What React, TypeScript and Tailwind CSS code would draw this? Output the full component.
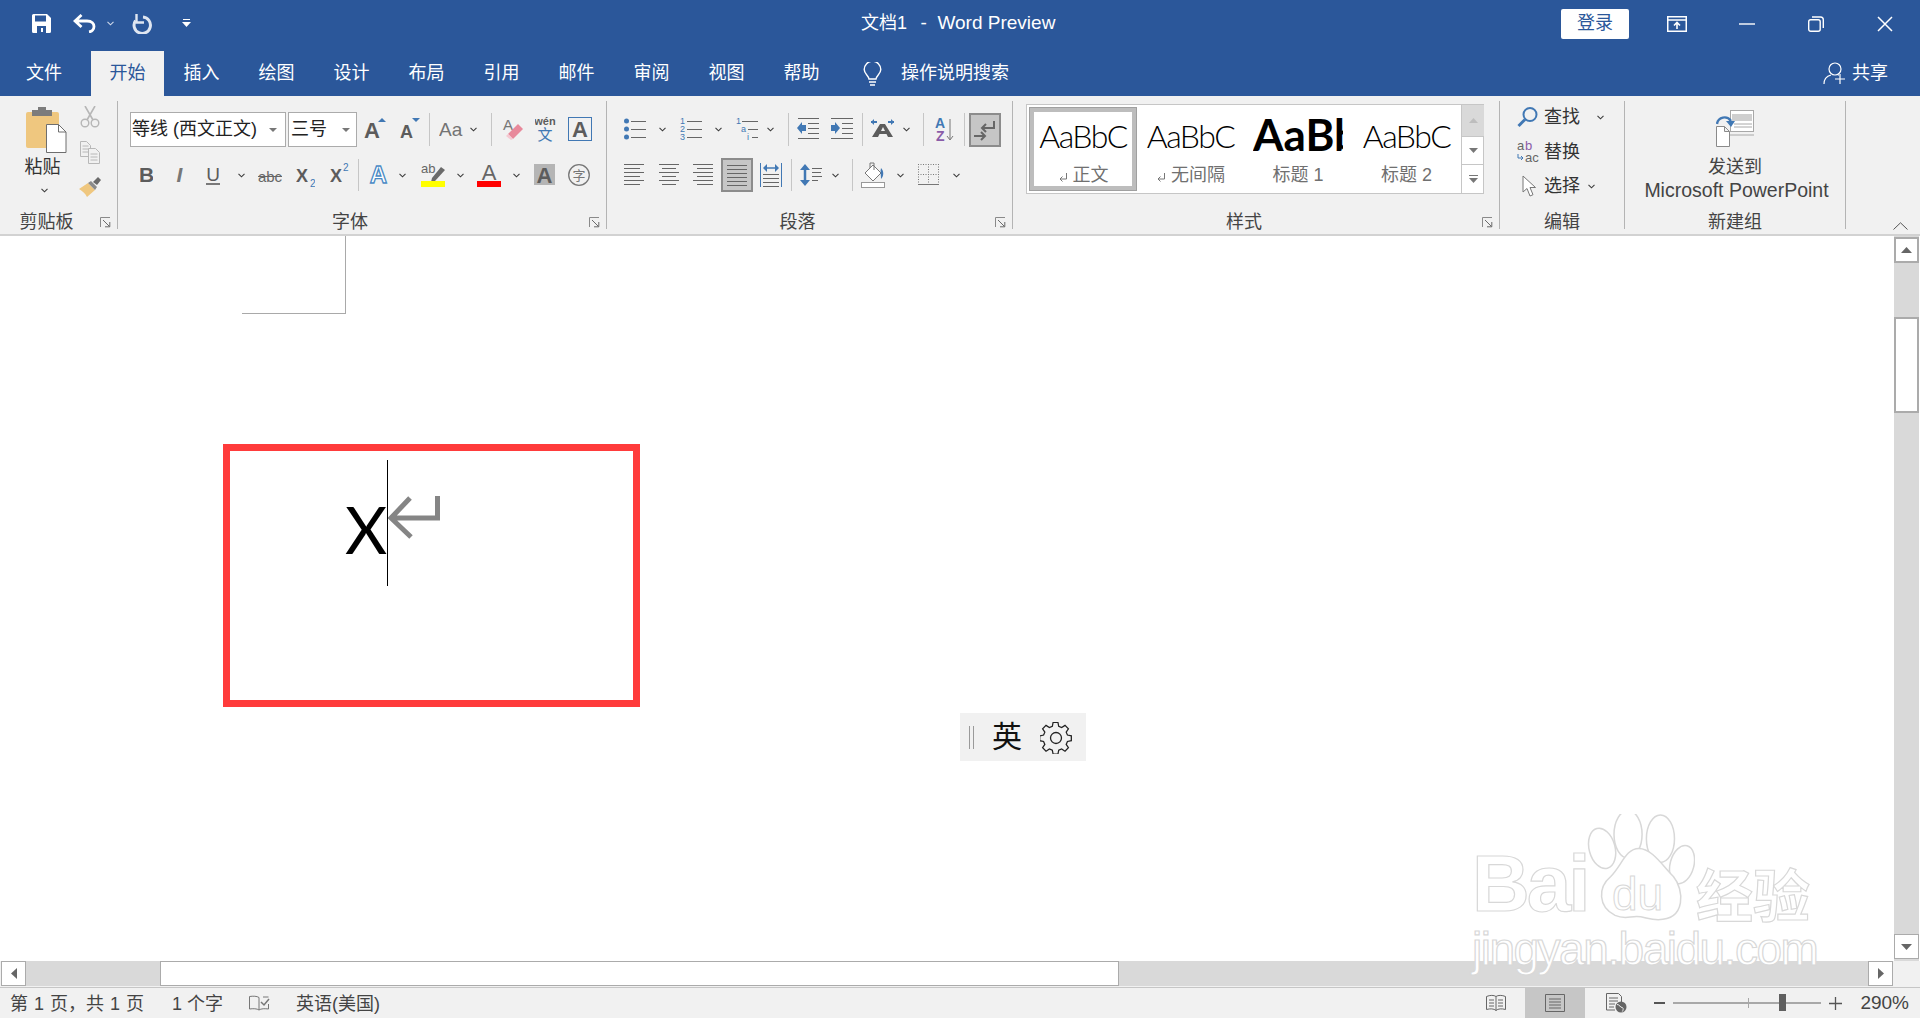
import React from 'react'

const LATIN = '"Liberation Sans", "Noto Sans CJK SC", sans-serif'
const CJK = '"Noto Sans CJK SC", sans-serif'
const BLUE = '#4178b4'
const GRAY = '#5c5c5c'

// svg of a fixed box, the coords inside are box coords
const Ic = ({ w, h, c = '', children }: { w: number; h: number; c?: string; children?: React.ReactNode }) => (
  <svg width={w} height={h} viewBox={`0 0 ${w} ${h}`} fill="none" className={`shrink-0 ${c}`}>
    {children}
  </svg>
)

const Chev = ({ c = '' }: { c?: string }) => (
  <svg width={7} height={5} viewBox="0 0 7 5" fill="none" className={`shrink-0 ${c}`}>
    <path d="M.5 .8 3.5 3.8 6.5 .8" stroke="#3c3c3c" strokeWidth="1.1" />
  </svg>
)

const Sep = ({ c = '' }: { c?: string }) => <div className={`w-px shrink-0 bg-[#c6c6c6] ${c}`} />

const GroupLine = () => <div className="w-px h-[128px] mt-[5px] bg-[#b4b4b4] shrink-0" />

const Launcher = () => (
  <svg width={11} height={11} viewBox="0 0 11 11" fill="none" className="absolute right-[6px] top-[7px]">
    <path d="M.5 10V.5H10" stroke="#8a8a8a" />
    <path d="M3 3 9.5 9.5M5 9.8H9.8V5" stroke="#6a6a6a" />
  </svg>
)

const Group = ({ c, label, launcher, children }: { c: string; label: string; launcher?: boolean; children?: React.ReactNode }) => (
  <div className={`flex flex-col h-full shrink-0 ${c}`}>
    <div className="h-[114px]">{children}</div>
    <div className={`relative h-[24px] flex items-center justify-center text-[18px] text-[#444] ${launcher ? 'pr-[24px]' : ''}`}>
      {label}
      {launcher && <Launcher />}
    </div>
  </div>
)

const Glyph = ({ x, y, s, f = GRAY, wt = 600, ff = LATIN, a, children }: { x: number; y: number; s: number; f?: string; wt?: number; ff?: string; a?: 'middle'; children: string }) => (
  <text x={x} y={y} fontSize={s} fill={f} fontWeight={wt} fontFamily={ff} textAnchor={a}>
    {children}
  </text>
)

const Lines = ({ ys, spans, color = '#666' }: { ys: number[]; spans: [number, number][]; color?: string }) => (
  <>
    {ys.map((y, i) => (
      <path key={y} d={`M${spans[i % spans.length][0]} ${y + 0.5}H${spans[i % spans.length][1]}`} stroke={color} />
    ))}
  </>
)

const TABS = ['插入', '绘图', '设计', '布局', '引用', '邮件', '审阅', '视图', '帮助']

const TitleBar = () => (
  <div className="h-[51px] bg-[#2b579a] flex items-center pr-[27px] pb-[4px] text-white shrink-0">
    <Ic w={19} h={19} c="ml-[32px]">
      <path d="M0 1.5A1.5 1.5 0 0 1 1.5 0H15l4 4v13.5a1.5 1.5 0 0 1-1.5 1.5h-16A1.5 1.5 0 0 1 0 17.5Z" fill="#fff" />
      <path d="M3 1.5h11v6H3ZM5 12h9v7H5Z" fill="#2b579a" />
      <path d="M9 14h2v4H9Z" fill="#fff" />
    </Ic>
    <Ic w={23} h={19} c="ml-[22px]">
      <path d="M8.500 1 2 7l6.500 6M2 7h12c5 0 7 3 7 5.500s-2 5-5 5.500" stroke="#fff" strokeWidth="2.800" />
    </Ic>
    <svg width={7} height={5} viewBox="0 0 7 5" fill="none" className="ml-[11px] shrink-0">
      <path d="M.5 .8 3.5 3.8 6.5 .8" stroke="#cfd9ea" strokeWidth="1.1" />
    </svg>
    <Ic w={21} h={20} c="ml-[17px]">
      <path d="M12 3a8.200 8.200 0 1 1-7.500 3.500" stroke="#dfe6f1" strokeWidth="3" />
      <path d="M5.500 0v8.500H13" stroke="#dfe6f1" strokeWidth="2.400" />
    </Ic>
    <Ic w={9} h={9} c="ml-[30px]">
      <path d="M1 .5h7" stroke="#fff" />
      <path d="M0 3h9L4.500 8Z" fill="#fff" />
    </Ic>
    <div className="ml-[670px] flex items-center text-[18px] whitespace-pre">
      文档1<span className="ml-[3px] text-[19px]">  -  Word Preview</span>
    </div>
    <div className="ml-auto w-[68px] h-[30px] bg-white rounded-[2px] flex items-center justify-center text-[18px] text-[#2b579a]">登录</div>
    <Ic w={20} h={16} c="ml-[38px]">
      <path d="M.75.75h18.5v14.5H.75ZM1 4h18" stroke="#fff" strokeWidth="1.5" />
      <path d="M10 13V7M7 9.5l3-3 3 3" stroke="#fff" strokeWidth="1.6" />
    </Ic>
    <Ic w={16} h={2} c="ml-[52px]">
      <path d="M0 1h16" stroke="#fff" strokeWidth="1.4" />
    </Ic>
    <Ic w={16} h={16} c="ml-[53px]">
      <rect x=".7" y="3.7" width="11.5" height="11.6" rx="2" stroke="#fff" strokeWidth="1.4" />
      <path d="M4 1h8.5A2.8 2.8 0 0 1 15.3 3.8V12" stroke="#fff" strokeWidth="1.4" />
    </Ic>
    <Ic w={16} h={16} c="ml-[53px]">
      <path d="M1 1l14 14M15 1 1 15" stroke="#fff" strokeWidth="1.5" />
    </Ic>
  </div>
)

const TabBar = () => (
  <div className="h-[45px] bg-[#2b579a] flex items-center pr-[32px] text-white text-[18px] shrink-0">
    <div className="w-[88px] mr-[3px] text-center">文件</div>
    <div className="w-[73px] h-full bg-[#f1f1f1] text-[#2b579a] flex items-center justify-center">开始</div>
    {TABS.map((t) => (
      <div key={t} className="w-[75px] text-center">
        {t}
      </div>
    ))}
    <Ic w={19} h={24} c="ml-[24px]">
      <path d="M6 17c0-3-4.800-5-4.800-9.500a8.300 8.300 0 0 1 16.600 0C17.800 12 13 14 13 17Z" stroke="#fff" strokeWidth="1.4" />
      <path d="M6 20h7M7 23h5" stroke="#fff" strokeWidth="1.6" />
    </Ic>
    <div className="ml-[19px]">操作说明搜索</div>
    <Ic w={23} h={23} c="ml-auto">
      <circle cx="12" cy="7" r="6" stroke="#fff" strokeWidth="1.2" />
      <path d="M1 22c0-5 3-8 7-9M15 13h1" stroke="#fff" strokeWidth="1.2" />
      <path d="M17 12v10M12 17h10" stroke="#fff" strokeWidth="1.2" />
    </Ic>
    <div className="ml-[6px]">共享</div>
  </div>
)

const Clipboard = () => (
  <Group c="w-[117px]" label="剪贴板" launcher>
    <div className="flex">
      <div className="w-[78px] pt-[11px] flex flex-col items-center">
        <Ic w={41} h={46} c="ml-[15px]">
          <rect y="5" width="33" height="36" rx="2" fill="#efc77f" />
          <path d="M6 9V3h6V0h8v3h6v6Z" fill="#7c7c7c" />
          <path d="M20.500 17.500h12l7.500 7.500v20.500H20.500Z" fill="#fff" stroke="#6e6e6e" />
          <path d="M32.500 17.500V25H40" stroke="#6e6e6e" />
        </Ic>
        <div className="text-[18px] leading-[22px] mt-[3px] ml-[7px] text-[#333]">粘贴</div>
        <Chev c="mt-[10px] ml-[10px]" />
      </div>
      <div className="w-[24px] pt-[10px] flex flex-col">
        <Ic w={20} h={22} c="ml-[2px]">
          <path d="M5 0l8 14M15 0 7 14" stroke="#b6b6b6" strokeWidth="1.6" />
          <circle cx="5" cy="17" r="3.800" stroke="#b6b6b6" strokeWidth="1.4" />
          <circle cx="15" cy="17" r="3.800" stroke="#b6b6b6" strokeWidth="1.4" />
        </Ic>
        <Ic w={20} h={23} c="mt-[13px] ml-[2px]">
          <path d="M.5.5h6l4 4v11H.5ZM2.500 5h6M2.500 8h6M2.500 11h6" stroke="#b8b8b8" />
          <path d="M8.500 7.500h7l4 4v11h-11ZM10.500 13h7M10.500 16h7M10.500 19h7" stroke="#b8b8b8" fill="#f1f1f1" />
        </Ic>
        <Ic w={23} h={20} c="mt-[13px]">
          <path d="M1 12 10 6l7 7-8 7C7 16 4 14 1 12Z" fill="#efc77f" />
          <path d="M10 6l3-2 6 6-2 3Z" fill="#8a8a8a" />
          <path d="M15 5 20 0l3 3-4 5Z" fill="#6a6a6a" />
        </Ic>
      </div>
    </div>
  </Group>
)

const FontGroup = () => (
  <Group c="w-[488px]" label="字体" launcher>
    <div className="flex h-[35px] mt-[16px] items-center">
      <div className="ml-[12px] w-[156px] h-[35px] shrink-0 bg-white border border-[#ababab] flex items-center pl-[1px] text-[18px] text-[#222] relative whitespace-nowrap">
        等线 (西文正文)
        <svg width={8} height={4} className="absolute right-[8px] top-[15px]"><path d="M0 0h8L4 4Z" fill="#777" /></svg>
      </div>
      <div className="ml-[2px] w-[69px] h-[35px] shrink-0 bg-white border border-[#ababab] flex items-center pl-[2px] text-[18px] text-[#222] relative">
        三号
        <svg width={8} height={4} className="absolute right-[6px] top-[15px]"><path d="M0 0h8L4 4Z" fill="#777" /></svg>
      </div>
      <Ic w={22} h={35} c="ml-[7px]">
        <Glyph x={0} y={26} s={22}>A</Glyph>
        <path d="M14 10h8l-4-4Z" fill={BLUE} />
      </Ic>
      <Ic w={21} h={35} c="ml-[13px]">
        <Glyph x={1} y={26} s={18}>A</Glyph>
        <path d="M13 6h8l-4 4Z" fill={BLUE} />
      </Ic>
      <Sep c="ml-[9px] h-[33px]" />
      <Ic w={24} h={35} c="ml-[9px]">
        <Glyph x={0} y={24} s={19} wt={500} f="#747474">Aa</Glyph>
      </Ic>
      <Chev c="ml-[7px]" />
      <Sep c="ml-[14px] h-[33px]" />
      <Ic w={21} h={35} c="ml-[10px]">
        <Glyph x={1} y={18} s={15} wt={500} f="#777">A</Glyph>
        <path d="M6 22 16 12l5 5-10 10Z" fill="#e8899b" />
        <path d="M6 22l5 5-2 1-5-4Z" fill="#f5c9d2" />
      </Ic>
      <Ic w={21} h={35} c="ml-[12px]">
        <Glyph x={10} y={13} s={11} wt={700} a="middle">wén</Glyph>
        <Glyph x={10} y={28} s={15} wt={400} f={BLUE} ff={CJK} a="middle">文</Glyph>
      </Ic>
      <Ic w={24} h={35} c="ml-[12px]">
        <rect x=".5" y="5.500" width="23" height="23" stroke={BLUE} />
        <Glyph x={12} y={25} s={22} a="middle">A</Glyph>
      </Ic>
    </div>
    <div className="flex h-[36px] mt-[10px] items-center">
      <Ic w={13} h={36} c="ml-[22px]"><Glyph x={6.500} y={25} s={21} wt={700} a="middle">B</Glyph></Ic>
      <Ic w={13} h={36} c="ml-[20px]">
        <text x={6.500} y={25} fontSize={21} fill="#777" fontWeight={700} fontStyle="italic" fontFamily={LATIN} textAnchor="middle">I</text>
      </Ic>
      <Ic w={14} h={36} c="ml-[20px]">
        <Glyph x={7} y={24} s={19} wt={500}  a="middle">U</Glyph>
        <path d="M0 27h14" stroke={GRAY} strokeWidth="1.6" />
      </Ic>
      <Chev c="ml-[18px]" />
      <Ic w={24} h={36} c="ml-[13px]">
        <Glyph x={12} y={25} s={15} wt={400} f="#666" a="middle">abc</Glyph>
        <path d="M0 19.500h24" stroke="#666" />
      </Ic>
      <Ic w={19} h={36} c="ml-[14px]">
        <Glyph x={0} y={25} s={18} wt={700}>X</Glyph>
        <Glyph x={14} y={30} s={10} wt={400} f={BLUE}>2</Glyph>
      </Ic>
      <Ic w={19} h={36} c="ml-[15px]">
        <Glyph x={0} y={25} s={18} wt={700}>X</Glyph>
        <Glyph x={13} y={14} s={10} wt={400} f={BLUE}>2</Glyph>
      </Ic>
      <Sep c="ml-[9px] h-[32px]" />
      <Ic w={19} h={36} c="ml-[10px]">
        <text x={9.500} y={26} fontSize={24} fill="#fff" stroke="#4a8ac5" strokeWidth="1.3" fontWeight={700} fontFamily={LATIN} textAnchor="middle">A</text>
      </Ic>
      <Chev c="ml-[11px]" />
      <Ic w={24} h={36} c="ml-[15px]">
        <Glyph x={0} y={16} s={13} wt={400} f="#666">ab</Glyph>
        <path d="M11 21 20 10l4 3-10 11-4 1Z" fill="#6a6a6a" />
        <rect y="24" width="24" height="6" fill="#ffff00" />
      </Ic>
      <Chev c="ml-[12px]" />
      <Ic w={24} h={36} c="ml-[13px]">
        <Glyph x={12} y={23} s={22} wt={500} f="#666" a="middle">A</Glyph>
        <rect y="24" width="24" height="6" fill="#ff0000" />
      </Ic>
      <Chev c="ml-[12px]" />
      <Ic w={21} h={36} c="ml-[14px]">
        <rect y="7" width="21" height="21" fill="#b5b5b5" />
        <Glyph x={10.500} y={26} s={22} a="middle">A</Glyph>
      </Ic>
      <Ic w={22} h={36} c="ml-[13px]">
        <circle cx="11" cy="18" r="10.300" stroke="#777" strokeWidth="1.3" />
        <Glyph x={11} y={23} s={13} wt={400} f="#777" ff={CJK} a="middle">字</Glyph>
      </Ic>
    </div>
  </Group>
)

const ALIGN_Y = [7, 11, 15, 19, 23, 27]

const ParaGroup = () => (
  <Group c="w-[405px]" label="段落" launcher>
    <div className="flex h-[35px] mt-[16px] items-center">
      <Ic w={22} h={35} c="ml-[17px]">
        {[9, 17, 25].map((y) => (
          <g key={y}>
            <circle cx="2.500" cy={y} r="2.500" fill={BLUE} />
            <path d={`M7 ${y + 0.5}h15`} stroke="#666" />
          </g>
        ))}
      </Ic>
      <Chev c="ml-[13px]" />
      <Ic w={22} h={35} c="ml-[14px]">
        {['1', '2', '3'].map((n, i) => (
          <g key={n}>
            <Glyph x={0} y={12 + i * 8} s={9} wt={400} f={BLUE}>{n}</Glyph>
            <path d={`M7 ${9.500 + i * 8}h15`} stroke="#666" />
          </g>
        ))}
      </Ic>
      <Chev c="ml-[13px]" />
      <Ic w={22} h={35} c="ml-[14px]">
        <Glyph x={0} y={12} s={9} wt={400} f={BLUE}>1</Glyph>
        <Glyph x={5} y={20} s={9} wt={400} f={BLUE}>a</Glyph>
        <Glyph x={11} y={28} s={9} wt={400} f={BLUE}>i</Glyph>
        <path d="M6 9.500h16M12 17.500h10M16 25.500h6" stroke="#666" />
      </Ic>
      <Chev c="ml-[9px]" />
      <Sep c="ml-[14px] h-[33px]" />
      <Ic w={22} h={35} c="ml-[8px]">
        <Lines ys={[6, 11, 16, 21, 26]} spans={[[1, 22], [11, 22], [11, 22], [11, 22], [1, 22]]} />
        <path d="M9 13H5V10L0 16l5 6v-3h4Z" fill={BLUE} />
      </Ic>
      <Ic w={22} h={35} c="ml-[12px]">
        <Lines ys={[6, 11, 16, 21, 26]} spans={[[0, 22], [11, 22], [11, 22], [11, 22], [0, 22]]} />
        <path d="M0 13h4V10l5 6-5 6v-3H0Z" fill={BLUE} />
      </Ic>
      <Sep c="ml-[9px] h-[33px]" />
      <Ic w={24} h={35} c="ml-[8px]">
        <path d="M0 10h6M17 10h6" stroke={BLUE} strokeWidth="1.800" />
        <path d="M0 10l3-3v6ZM23 10l-3-3v6Z" fill={BLUE} />
        <path d="M1 25 9 12h5l8 13h-5l-1.500-3h-7L7 25ZM10 19h4l-2-4Z" fill={GRAY} fillRule="evenodd" />
      </Ic>
      <Chev c="ml-[8px]" />
      <Sep c="ml-[13px] h-[33px]" />
      <Ic w={19} h={35} c="ml-[11px]">
        <Glyph x={0} y={16} s={14} wt={700} f={BLUE}>A</Glyph>
        <Glyph x={1} y={29} s={14} wt={700} f="#8a5ca8">Z</Glyph>
        <path d="M15 7v20M12 24l3 4 3-4" stroke="#777" />
      </Ic>
      <Sep c="ml-[10px] h-[33px]" />
      <div className="ml-[4px] w-[32px] h-[34px] bg-[#c6c6c6] border-2 border-[#8c8c8c] flex items-center justify-center shrink-0">
        <Ic w={22} h={22}>
          <path d="M20 2v7H9M12 5 8 9l4 4" stroke="#666" strokeWidth="2" />
          <path d="M0 17h11M7 13l4 4-4 4" stroke="#666" strokeWidth="2" />
        </Ic>
      </div>
    </div>
    <div className="flex h-[36px] mt-[10px] items-center">
      <Ic w={21} h={36} c="ml-[17px]">
        <Lines ys={ALIGN_Y} spans={[[0, 20], [0, 16], [0, 20], [0, 16]]} />
      </Ic>
      <Ic w={21} h={36} c="ml-[14px]">
        <Lines ys={ALIGN_Y} spans={[[0, 20], [3, 17]]} />
      </Ic>
      <Ic w={21} h={36} c="ml-[13px]">
        <Lines ys={ALIGN_Y} spans={[[0, 20], [4, 20]]} />
      </Ic>
      <div className="ml-[7px] w-[32px] h-[34px] bg-[#c6c6c6] border-2 border-[#8c8c8c] flex items-center justify-center shrink-0">
        <Ic w={20} h={21}>
          <Lines ys={[0, 4, 8, 12, 16, 20]} spans={[[0, 20]]} />
        </Ic>
      </div>
      <Ic w={22} h={36} c="ml-[7px]">
        <path d="M.500 6v24M21.500 6v24" stroke={BLUE} />
        <path d="M4 11h14" stroke={BLUE} strokeWidth="1.500" />
        <path d="M3 11l4-4v8ZM19 11l-4-4v8Z" fill={BLUE} />
        <Lines ys={[17, 21, 25, 29]} spans={[[3, 19]]} />
      </Ic>
      <Sep c="ml-[9px] h-[32px]" />
      <Ic w={22} h={36} c="ml-[8px]">
        <path d="M5 11v15" stroke={BLUE} strokeWidth="2.500" />
        <path d="M0 13l5-6 5 6ZM0 23l5 6 5-6Z" fill={BLUE} />
        <Lines ys={[11, 15, 19, 23]} spans={[[12, 22], [12, 21], [12, 22], [12, 18]]} />
      </Ic>
      <Chev c="ml-[10px]" />
      <Sep c="ml-[13px] h-[32px]" />
      <Ic w={24} h={36} c="ml-[8px]">
        <path d="M12 8 20 16l-8 8-8-8Z" stroke="#777" fill="#fff" />
        <path d="M9 11V6h4v7" stroke="#777" />
        <path d="M20 11c3 3 3 8 0 11 0-4-1-8 0-11Z" fill={BLUE} />
        <rect x=".5" y="25.500" width="23" height="5" fill="#fff" stroke="#999" />
      </Ic>
      <Chev c="ml-[12px]" />
      <Ic w={21} h={36} c="ml-[14px]">
        <path d="M.5 7v20M10.500 7v20M20.500 7v20M0 7.500h21M0 17.500h21" stroke="#777" strokeDasharray="1 1.500" />
        <path d="M0 27.500h21" stroke="#777" />
      </Ic>
      <Chev c="ml-[14px]" />
    </div>
  </Group>
)

const StyleCell = ({ c, big, label, mark }: { c: string; big: React.ReactNode; label: string; mark?: boolean }) => (
  <div className={`flex flex-col items-center shrink-0 overflow-hidden ${c}`}>
    <div className="h-[45px] flex items-end">{big}</div>
    <div className="mt-[12px] flex items-center text-[18px] leading-[22px] text-[#707070] whitespace-nowrap">
      {mark && (
        <Ic w={10} h={10} c="mr-[5px] mt-[4px]">
          <path d="M8.500 1v6H2M4.500 4.500 2 7l2.500 2.500" stroke="#777" />
        </Ic>
      )}
      {label}
    </div>
  </div>
)

const AaLight = () => <span className="font-['Lato'] font-light text-[32px] leading-[33px] tracking-[-1.5px] text-black">AaBbC</span>

const StylesGroup = () => (
  <Group c="w-[486px]" label="样式" launcher>
    <div className="ml-[13px] mt-[8px] w-[458px] h-[90px] bg-white border border-[#c6c6c6] flex">
      <div className="w-[108px] h-[84px] mt-[2px] ml-[2px] border-[5px] border-[#bdbdbd] outline outline-[#a0a0a0] -outline-offset-1 shrink-0">
        <StyleCell c="w-[98px] -mt-[3px] h-[77px]" big={<AaLight />} label="正文" mark />
      </div>
      <StyleCell c="w-[107px] pt-[2px]" big={<AaLight />} label="无间隔" mark />
      <StyleCell
        c="w-[108px] pt-[2px]"
        big={
          <div className="w-[90px] -mb-[4px] overflow-hidden whitespace-nowrap font-['Lato'] font-bold text-[44px] leading-[44px] text-black">AaBbC</div>
        }
        label="标题 1"
      />
      <StyleCell c="w-[109px] pt-[2px]" big={<AaLight />} label="标题 2" />
      <div className="w-[23px] flex flex-col border-l border-[#c6c6c6] shrink-0">
        <div className="h-[31px] bg-[#d9d9d9] flex items-center justify-center">
          <svg width={9} height={5}><path d="M0 5h9L4.500 0Z" fill="#bdbdbd" /></svg>
        </div>
        <div className="h-[29px] border-y border-[#c6c6c6] flex items-center justify-center">
          <svg width={9} height={5}><path d="M0 0h9L4.500 5Z" fill="#777" /></svg>
        </div>
        <div className="flex-1 flex items-center justify-center">
          <svg width={9} height={8}><path d="M0 .5h9" stroke="#777" /><path d="M0 3h9L4.500 8Z" fill="#777" /></svg>
        </div>
      </div>
    </div>
  </Group>
)

const EditGroup = () => (
  <Group c="w-[124px]" label="编辑">
    <div className="pt-[4px] text-[18px] text-[#333] flex flex-col">
      <div className="h-[34px] flex items-center">
        <Ic w={23} h={22} c="ml-[17px]">
          <circle cx="13" cy="8.500" r="6.500" stroke={BLUE} strokeWidth="2" />
          <path d="M8 13.500 1.500 20" stroke={BLUE} strokeWidth="3" />
        </Ic>
        <span className="ml-[4px]">查找</span>
        <Chev c="ml-[17px]" />
      </div>
      <div className="h-[34px] mt-[1px] flex items-center">
        <Ic w={23} h={24} c="ml-[17px]">
          <Glyph x={0} y={10} s={13} wt={400} f="#666">a</Glyph>
          <Glyph x={8} y={10} s={13} wt={400} f="#8a5ca8">b</Glyph>
          <Glyph x={8} y={22} s={13} wt={400} f="#666">ac</Glyph>
          <path d="M1 14v4h5M4 16l2 2-2 2" stroke={BLUE} />
        </Ic>
        <span className="ml-[4px]">替换</span>
      </div>
      <div className="h-[34px] flex items-center">
        <Ic w={15} h={23} c="ml-[22px]">
          <path d="M1 1v16l4-3.500 3 7.500 3-1.300-3-7.200h5.500Z" fill="#fff" stroke="#777" />
        </Ic>
        <span className="ml-[7px]">选择</span>
        <Chev c="ml-[8px]" />
      </div>
    </div>
  </Group>
)

const NewGroup = () => (
  <Group c="w-[220px]" label="新建组">
    <div className="pt-[14px] flex flex-col items-center text-[#444]">
      <Ic w={38} h={37}>
        <rect x="14.500" y=".5" width="23" height="21" fill="#fff" stroke="#a8a8a8" />
        <path d="M16 4h20v7H16Z" fill="#cfcfcf" />
        <path d="M18 14h18M18 17h18M14 25h24" stroke="#a8a8a8" />
        <path d="M1 14C2 7 11 5 15 11" stroke={BLUE} strokeWidth="2.400" />
        <path d="M10 11h9l-4 6Z" fill={BLUE} />
        <path d="M.5 16.500h8l5 5v15H.5ZM8.500 16.500v5h5" fill="#fff" stroke="#8a8a8a" />
      </Ic>
      <div className="mt-[8px] text-[18px] leading-[24px]">发送到</div>
      <div className="-mt-[1px] ml-[3px] text-[19.5px] leading-[24px] whitespace-nowrap">Microsoft PowerPoint</div>
    </div>
  </Group>
)

const Ribbon = () => (
  <div className="h-[140px] bg-[#f1f1f1] border-b-2 border-[#d2d2d2] flex shrink-0">
    <Clipboard />
    <GroupLine />
    <FontGroup />
    <GroupLine />
    <ParaGroup />
    <GroupLine />
    <StylesGroup />
    <GroupLine />
    <EditGroup />
    <GroupLine />
    <NewGroup />
    <GroupLine />
    <div className="flex-1 flex items-end justify-end pr-[12px] pb-[4px]">
      <svg width={15} height={8} viewBox="0 0 15 8" fill="none">
        <path d="M.5 7.500 7.500 .8 14.500 7.500" stroke="#555" />
      </svg>
    </div>
  </div>
)

const Page = () => (
  <div className="flex-1 bg-white overflow-hidden">
    <div className="ml-[242px] w-[104px] h-[78px] border-r border-b border-[#a9a9a9]" />
    <div className="ml-[223px] mt-[130px] w-[417px] h-[263px] border-[7px] border-[#ff3b3b] flex items-start">
      <div className="ml-[115px] w-[42px] mt-[39px] font-['Lato'] font-normal text-[65px] leading-[78px] text-black">X</div>
      <div className="w-px h-[126px] mt-[9px] bg-black shrink-0" />
      <Ic w={52} h={48} c="mt-[43px]">
        <path d="M49.500 2v22H3M22 4 3 24l20 19" stroke="#858585" strokeWidth="5" />
      </Ic>
    </div>
  </div>
)

const VScroll = () => (
  <div className="w-[26px] pr-px flex flex-col bg-white shrink-0">
    <div className="flex-1 bg-[#d9d9d9] flex flex-col">
      <div className="h-[26px] mt-px bg-white border-2 border-[#ababab] flex items-center justify-center shrink-0">
        <svg width={11} height={6}><path d="M0 6h11L5.500 0Z" fill="#666" /></svg>
      </div>
      <div className="h-[54px] shrink-0" />
      <div className="h-[96px] bg-white border-2 border-[#ababab] shrink-0" />
      <div className="flex-1" />
      <div className="h-[25px] mb-[2px] bg-white border border-[#ababab] flex items-center justify-center shrink-0">
        <svg width={11} height={6}><path d="M0 0h11L5.500 6Z" fill="#666" /></svg>
      </div>
    </div>
  </div>
)

const HScroll = () => (
  <div className="h-[26px] flex bg-[#f1f1f1] shrink-0">
    <div className="w-[25px] ml-px h-[25px] bg-white border border-[#ababab] flex items-center justify-center">
      <svg width={6} height={11}><path d="M6 0v11L0 5.500Z" fill="#666" /></svg>
    </div>
    <div className="w-[134px] h-[25px] bg-[#d9d9d9]" />
    <div className="w-[959px] h-[25px] bg-white border border-[#ababab]" />
    <div className="w-[749px] h-[25px] bg-[#d9d9d9]" />
    <div className="w-[25px] h-[25px] bg-white border border-[#ababab] flex items-center justify-center">
      <svg width={6} height={11}><path d="M0 0v11l6-5.500Z" fill="#666" /></svg>
    </div>
  </div>
)

const StatusBar = () => (
  <div className="h-[31px] bg-[#f1f1f1] border-t border-[#c6c6c6] flex items-center text-[18px] text-[#444] pr-[11px] shrink-0 whitespace-pre">
    <span className="ml-[10px] w-[162px] pt-[2px] [word-spacing:1px]">第 1 页，共 1 页</span>
    <span className="w-[77px] pt-[2px]">1 个字</span>
    <Ic w={21} h={16}>
      <path d="M10 2.500C8 1 4 1 .5 1.500V14C4 13.500 8 13.500 10 15c2-1.500 6-1.500 9.500-1V9M10 2.500V15M14 2h5.500" stroke="#777" />
      <path d="M12 7l3 3 5-6" stroke="#777" strokeWidth="1.500" />
    </Ic>
    <span className="ml-[26px] pt-[2px]">英语(美国)</span>
    <Ic w={20} h={18} c="ml-auto">
      <path d="M.5 2.500C4 1 8 1 10 2.500c2-1.500 6-1.500 9.500 0v13c-3.500-1-7.500-1-9.500 1-2-2-6-2-9.500-1ZM10 2.500v14M3 6h5M3 9h5M3 12h5M12 6h5M12 9h5M12 12h5" stroke="#666" />
    </Ic>
    <div className="ml-[19px] w-[60px] h-[30px] bg-[#c6c6c6] flex items-center justify-center">
      <Ic w={20} h={18}>
        <path d="M.5.5h19v17H.5ZM4 5h12M4 8h12M4 11h12M4 14h12" stroke="#666" />
      </Ic>
    </div>
    <Ic w={22} h={20} c="ml-[21px]">
      <path d="M.5.5h12l3 3V9M.5.5V17H9M3 5h9M3 8h9M3 11h6M3 14h5" stroke="#666" />
      <circle cx="15" cy="14" r="5.500" fill="#666" />
      <path d="M11 11.500c3 0 3 3 5 3s1 4 0 4" stroke="#f1f1f1" />
    </Ic>
    <div className="ml-[26px] w-[11px] h-[2px] bg-[#555]" />
    <div className="ml-[8px] relative w-[148px] h-[2px] bg-[#a8a8a8]">
      <div className="absolute left-[75px] -top-[4px] w-px h-[10px] bg-[#a8a8a8]" />
      <div className="absolute left-[106px] -top-[8px] w-[7px] h-[17px] bg-[#606060]" />
    </div>
    <Ic w={13} h={13} c="ml-[8px]">
      <path d="M0 6.500h13M6.500 0v13" stroke="#555" strokeWidth="1.300" />
    </Ic>
    <span className="ml-[18px] text-[19px]">290%</span>
  </div>
)

const Watermark = () => (
  <div className="absolute left-[1470px] top-[826px] w-[360px] h-[155px] text-white [-webkit-text-stroke:1.2px_#d8d8d8] pointer-events-none">
    <div className="absolute left-[2px] top-[22px] font-['Liberation_Sans'] font-bold text-[80px] leading-[72px] tracking-[-3px]">Bai</div>
    <svg width={108} height={112} viewBox="0 0 100 100" fill="#fff" stroke="#d8d8d8" strokeWidth="1.400" className="absolute left-[117px] -top-[12px]">
      <ellipse cx="14" cy="30" rx="12" ry="19" transform="rotate(-15 14 30)" />
      <ellipse cx="38" cy="17" rx="13" ry="22" />
      <ellipse cx="68" cy="21" rx="13" ry="22" />
      <ellipse cx="88" cy="45" rx="11" ry="18" transform="rotate(15 88 45)" />
      <path d="M48 30C60 30 70 46 80 56c10 12 12 40-14 40-9 0-13-3-20-3s-11 3-20-1C10 84 10 66 22 56 32 46 36 30 48 30Z" />
    </svg>
    <div className="absolute left-[142px] top-[46px] font-['Liberation_Sans'] text-[46px] leading-[44px] [-webkit-text-stroke:1px_#d8d8d8]">du</div>
    <div className="absolute left-[226px] top-[37px] font-['Noto_Sans_CJK_SC'] font-bold text-[57px] leading-[58px]">经验</div>
    <div className="absolute left-[2px] top-[100px] font-['Liberation_Sans'] text-[46px] leading-[46px] tracking-[-1.5px] whitespace-nowrap">jingyan.baidu.com</div>
  </div>
)

const Ime = () => (
  <div className="absolute left-[960px] top-[713px] w-[126px] h-[48px] bg-[#f1f1f1] flex items-center text-[#111]">
    <div className="ml-[9px] w-[5px] h-[23px] border-x border-[#9a9a9a]" />
    <div className="ml-[18px] text-[30px] leading-[36px]">英</div>
    <Ic w={32} h={32} c="ml-[18px] mt-[1px]">
      <path
        d="M13.500 1.500h5l.8 4 3 1.300 3.500-2.300 3.500 3.500-2.300 3.500 1.300 3 4 .8v5l-4 .8-1.300 3 2.300 3.500-3.500 3.500-3.500-2.300-3 1.300-.8 4h-5l-.8-4-3-1.300-3.500 2.300-3.500-3.500 2.300-3.500-1.300-3-4-.8v-5l4-.8 1.300-3L2.700 8 6.200 4.500l3.500 2.300 3-1.300Z"
        stroke="#222"
        strokeWidth="1.300"
        transform="translate(0 -1) scale(.97)"
      />
      <circle cx="16" cy="16" r="5.500" stroke="#222" strokeWidth="1.300" />
    </Ic>
  </div>
)

export default function App() {
  return (
    <div className="relative w-[1920px] h-[1018px] flex flex-col overflow-hidden bg-white font-['Liberation_Sans','Noto_Sans_CJK_SC',sans-serif]">
      <TitleBar />
      <TabBar />
      <Ribbon />
      <div className="flex-1 flex min-h-0">
        <Page />
        <VScroll />
      </div>
      <HScroll />
      <StatusBar />
      <Ime />
      <Watermark />
    </div>
  )
}
